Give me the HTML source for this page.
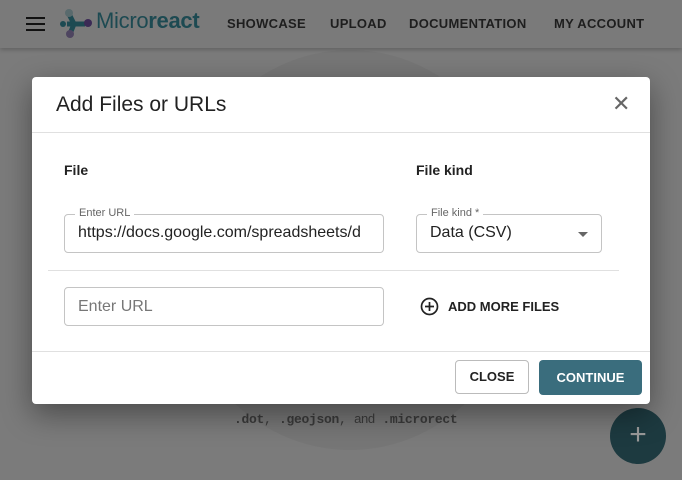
<!DOCTYPE html><html><head><style>
html,body{margin:0;width:682px;height:480px;overflow:hidden}
body{background:#7b7b7b;font-family:"Liberation Sans",sans-serif;position:relative}
.bar{position:absolute;left:0;top:0;width:682px;height:48px;background:#7a7a7a;box-shadow:0 2px 4px rgba(0,0,0,.2)}
.nav{position:absolute;top:16px;font-size:13px;font-weight:bold;color:#1e1e1e;letter-spacing:.3px}
.circ{position:absolute;border-radius:50%;background:#828282}
.dlg{position:absolute;left:32px;top:77px;width:618px;height:327px;background:#fff;border-radius:4px;box-shadow:0 10px 30px rgba(0,0,0,.4)}
.abs{position:absolute}
.field{position:absolute;border:1px solid #c4c4c4;border-radius:4px;height:39px;box-sizing:border-box}
.lbl{position:absolute;top:-8px;left:10px;background:#fff;padding:0 4px;font-size:11px;color:#666}
</style></head><body>
<div class="circ" style="left:170px;top:50px;width:360px;height:400px;background:#767676"></div>
<div class="bar"></div>
<div class="abs" style="left:26px;top:17px;width:19px;height:2px;background:#111;box-shadow:0 6px 0 #111,0 12px 0 #111"></div>
<svg class="abs" style="left:59px;top:7px" width="34" height="32"><line x1="8" y1="17" x2="26" y2="17" stroke="#1d4a52" stroke-width="5"/><line x1="15" y1="17" x2="10" y2="7" stroke="#1d4a52" stroke-width="5"/><line x1="15" y1="17" x2="11" y2="27" stroke="#1d4a52" stroke-width="5"/><circle cx="10" cy="6" r="4" fill="#596a6d"/><circle cx="11" cy="27" r="4" fill="#4e4560"/><circle cx="29" cy="16" r="4" fill="#3b2a55"/><circle cx="4" cy="17" r="3" fill="#1d4a52"/></svg>
<div class="abs" style="left:96px;top:8px;font-size:22px;color:#1d4a52;letter-spacing:-.3px">Micro<span style="font-weight:600">react</span></div>
<div class="nav" style="left:227px">SHOWCASE</div><div class="nav" style="left:330px">UPLOAD</div><div class="nav" style="left:409px">DOCUMENTATION</div><div class="nav" style="left:554px">MY ACCOUNT</div>
<div class="abs" style="left:234px;top:411px;font-size:13px;color:#3a3a3a;font-family:'Liberation Mono',monospace;letter-spacing:-.3px"><b>.dot</b>, <b>.geojson</b>, <span style="font-family:'Liberation Sans'">and</span> <b>.microrect</b></div>
<div class="abs" style="left:610px;top:408px;width:56px;height:56px;border-radius:50%;background:#1d3a40;color:#999;font-size:30px;text-align:center;line-height:54px">+</div>
<div class="dlg">
<div class="abs" style="left:24px;top:16px;font-size:21px;color:#222">Add Files or URLs</div>
<div class="abs" style="left:580px;top:14px;font-size:22px;color:#666">✕</div>
<div class="abs" style="left:0;top:55px;width:618px;height:1px;background:#e0e0e0"></div>
<div class="abs" style="left:32px;top:85px;font-size:14px;font-weight:bold;color:#222">File</div>
<div class="abs" style="left:384px;top:85px;font-size:14px;font-weight:bold;color:#222">File kind</div>
<div class="field" style="left:32px;top:137px;width:320px"><span class="lbl">Enter URL</span><div class="abs" style="left:13px;top:9px;width:293px;overflow:hidden;font-size:16px;color:#222;white-space:nowrap">https://docs.google.com/spreadsheets/d</div></div>
<div class="field" style="left:384px;top:137px;width:186px"><span class="lbl">File kind *</span><div class="abs" style="left:13px;top:9px;font-size:16px;color:#222">Data (CSV)</div><div class="abs" style="left:161px;top:17px;border:5px solid transparent;border-top-color:#666;border-bottom:0"></div></div>
<div class="abs" style="left:16px;top:193px;width:571px;height:1px;background:#e0e0e0"></div>
<div class="field" style="left:32px;top:210px;width:320px"><div class="abs" style="left:13px;top:10px;font-size:16px;color:#777">Enter URL</div></div>
<svg class="abs" style="left:388px;top:220px" width="19" height="19"><circle cx="9.5" cy="9.5" r="8" fill="none" stroke="#222" stroke-width="1.7"/><path d="M9.5 5v9M5 9.5h9" stroke="#222" stroke-width="1.7"/></svg>
<div class="abs" style="left:416px;top:222px;font-size:13px;font-weight:bold;color:#222">ADD MORE FILES</div>
<div class="abs" style="left:0;top:274px;width:618px;height:1px;background:#e0e0e0"></div>
<div class="abs" style="left:423px;top:283px;width:74px;height:34px;border:1px solid #bbb;border-radius:4px;box-sizing:border-box;text-align:center;line-height:32px;font-size:13px;font-weight:bold;color:#222">CLOSE</div>
<div class="abs" style="left:507px;top:283px;width:103px;height:35px;background:#3a6d7d;border-radius:4px;text-align:center;line-height:35px;font-size:13px;font-weight:bold;color:#fff">CONTINUE</div>
</div>
</body></html>
